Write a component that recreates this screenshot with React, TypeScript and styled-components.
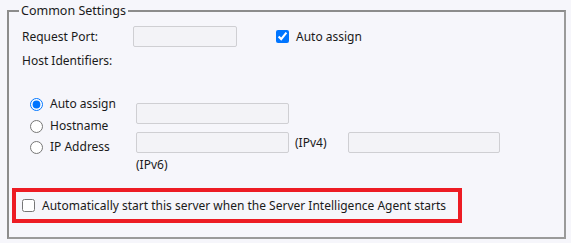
import React from 'react';
import styled, { createGlobalStyle } from 'styled-components';

const GlobalStyle = createGlobalStyle`
  html, body {
    margin: 0;
    padding: 0;
    background: #f6f6fb;
  }
  body {
    font-family: "Noto Sans", "Open Sans", sans-serif;
    font-size: 12px;
    color: #1a1a1a;
  }
`;

const Page = styled.div`
  padding: 2px 0 0 7px;
  width: 559px;
`;

const Fieldset = styled.fieldset`
  margin: 0;
  padding: 7px 0 14px 3px;
  border: 2px solid #9a9a9a;
  border-left-color: #8c8c8c;
  border-top-color: #8c8c8c;
  border-radius: 0;
  min-width: 0;
`;

const Legend = styled.legend`
  margin-left: 7px;
  padding: 0 2px;
  font-size: 12.5px;
  line-height: 17px;
`;

const Row = styled.div<{ $top?: number }>`
  display: flex;
  align-items: center;
  padding-left: 10px;
  margin-top: ${p => p.$top ?? 0}px;
`;

const Label = styled.span<{ $w?: number }>`
  display: inline-block;
  width: ${p => (p.$w ? `${p.$w}px` : 'auto')};
  line-height: 18px;
  white-space: nowrap;
`;

const TextBox = styled.input<{ $w: number }>`
  box-sizing: border-box;
  width: ${p => p.$w}px;
  height: 21px;
  margin: 0;
  padding: 0 4px;
  border: 1px solid #cfcfd3;
  border-radius: 2px;
  background: #f3f3f7;
  font: inherit;
  outline: none;
`;

const Check = styled.input.attrs({ type: 'checkbox' })<{ $gap?: number }>`
  width: 13px;
  height: 13px;
  margin: 0 7px 0 ${p => p.$gap ?? 0}px;
  accent-color: #0075ff;
`;

const Radio = styled.input.attrs({ type: 'radio' })`
  width: 13px;
  height: 13px;
  margin: 2px 7px 0 0;
  accent-color: #0075ff;
`;

const HostGrid = styled.div`
  display: grid;
  grid-template-columns: 106px auto;
  padding-left: 18px;
  margin-top: 23px;
`;

const RadioList = styled.div`
  display: flex;
  flex-direction: column;
`;

const RadioRow = styled.label`
  display: flex;
  align-items: center;
  height: 21.5px;
`;

const FieldColumn = styled.div`
  display: flex;
  flex-direction: column;
  padding-top: 10px;
  gap: 8px;
`;

const FieldLine = styled.div`
  display: flex;
  align-items: center;
`;

const Suffix = styled.span`
  width: 53px;
  margin-left: 6px;
`;

const Note = styled.div`
  line-height: 17px;
  margin-top: -5px;
`;

const Highlight = styled.label`
  box-sizing: border-box;
  display: flex;
  align-items: center;
  width: 450px;
  height: 35px;
  margin-top: 15px;
  padding-left: 6px;
  border: 4px solid #ed1c24;
  white-space: nowrap;
`;

export default function App() {
  return (
    <Page>
      <GlobalStyle />
      <Fieldset>
        <Legend>Common Settings</Legend>
        <Row>
          <Label $w={111}>Request Port:</Label>
          <TextBox $w={104} disabled />
          <Check defaultChecked $gap={39} />
          <Label>Auto assign</Label>
        </Row>
        <Row $top={5}>
          <Label>Host Identifiers:</Label>
        </Row>
        <HostGrid>
          <RadioList>
            <RadioRow>
              <Radio name="host" defaultChecked />
              Auto assign
            </RadioRow>
            <RadioRow>
              <Radio name="host" />
              Hostname
            </RadioRow>
            <RadioRow>
              <Radio name="host" />
              IP Address
            </RadioRow>
          </RadioList>
          <FieldColumn>
            <TextBox $w={153} disabled />
            <FieldLine>
              <TextBox $w={153} disabled />
              <Suffix>(IPv4)</Suffix>
              <TextBox $w={152} disabled />
            </FieldLine>
            <Note>(IPv6)</Note>
          </FieldColumn>
        </HostGrid>
        <Highlight>
          <Check />
          Automatically start this server when the Server Intelligence Agent starts
        </Highlight>
      </Fieldset>
    </Page>
  );
}
